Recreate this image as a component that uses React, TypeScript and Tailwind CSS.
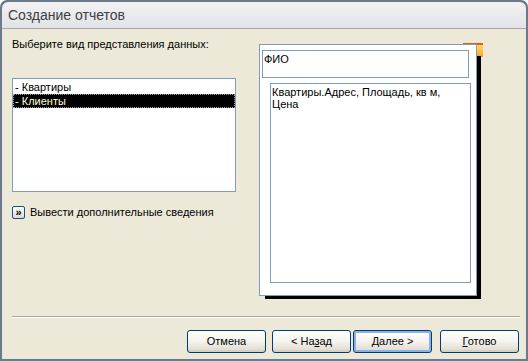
import React from "react";

const font = { fontFamily: '"Liberation Sans", Arial, sans-serif' };

function XpButton({
  children,
  focused = false,
  className = "",
}: {
  children: React.ReactNode;
  focused?: boolean;
  className?: string;
}) {
  return (
    <button
      type="button"
      className={
        "h-[23px] w-[79px] rounded-[3px] border border-[#003c74] bg-gradient-to-b from-[#ffffff] via-[#f4f3ee] to-[#dcd8cc] text-[11px] leading-none text-black " +
        (focused ? "shadow-[inset_0_0_0_2px_#8cb0e8] " : "shadow-[inset_0_-2px_0_#d6d0c5] ") +
        className
      }
    >
      {children}
    </button>
  );
}

export default function App() {
  return (
    <div
      style={font}
      className="flex h-[361px] w-[528px] flex-col overflow-hidden rounded-t-[7px] border-2 border-[#6e7a88] bg-[#6e7a88]"
    >
      {/* title bar */}
      <div className="flex h-[27px] shrink-0 items-center rounded-t-[6px] border-b border-[#a3a6ab] bg-gradient-to-b from-[#f2f2f4] to-[#e2e3e7] pl-[6px] text-[14px] text-[#404040]">
        Создание отчетов
      </div>

      {/* content */}
      <div className="flex flex-1 flex-col border-x border-b border-[#e6e6e6] bg-[#ece9d8] text-[11px] text-black">
        <div className="flex h-[271px] pl-[9px]">
          {/* left column */}
          <div className="flex w-[224px] flex-col">
            <div className="mt-[8px] leading-[14px]">Выберите вид представления данных:</div>
            <div className="mt-[27px] h-[114px] border border-[#7f9db9] bg-white pt-[1px]">
              <div className="h-[14px] pl-[2px] leading-[14px]">- Квартиры</div>
              <div className="h-[14px] border border-dotted border-[#9a9a9a] bg-black pl-[1px] leading-[12px] text-[#ffffd8]">
                - Клиенты
              </div>
            </div>
            <div className="mt-[13px] flex items-center">
              <div className="flex h-[13px] w-[13px] items-center justify-center rounded-[2px] border border-[#1d4f86] bg-gradient-to-b from-white to-[#dcdad0] text-[11px] font-bold leading-none text-black">
                »
              </div>
              <span className="ml-[5px] leading-[14px]">Вывести дополнительные сведения</span>
            </div>
          </div>

          {/* preview card */}
          <div className="relative ml-[23px] mt-[15px] h-[252px] w-[218px]">
            <div className="absolute left-[204px] top-[-1px] h-[14px] w-[20px] border-t-2 border-[#f05a10] bg-gradient-to-b from-[#ffe060] to-[#f5a020]" />
            <div className="absolute left-[6px] top-[12px] h-[243px] w-[216px] bg-black" />
            <div className="relative h-full w-full border border-[#7f9db9] bg-white pt-[5px]">
              <div className="ml-[2px] h-[28px] w-[207px] border border-[#7f9db9] pl-[1px] pt-[2px] leading-[12px]">
                ФИО
              </div>
              <div className="ml-[10px] mt-[5px] h-[200px] w-[201px] border border-[#7f9db9] px-[1px] pt-[2px] leading-[12px]">
                Квартиры.Адрес, Площадь, кв м,
                <br />
                Цена
              </div>
            </div>
          </div>
        </div>

        {/* separator */}
        <div className="ml-[9px] mr-[5px] mt-[16px] h-[2px] border-t border-b border-t-[#aca899] border-b-white" />

        {/* buttons */}
        <div className="mt-[12px] flex pl-[184px]">
          <XpButton>Отмена</XpButton>
          <XpButton className="ml-[6px]">
            &lt; На<span className="underline">з</span>ад
          </XpButton>
          <XpButton focused className="ml-[2px]">
            <span className="underline">Д</span>алее &gt;
          </XpButton>
          <XpButton className="ml-[8px]">
            <span className="underline">Г</span>отово
          </XpButton>
        </div>
      </div>
    </div>
  );
}
